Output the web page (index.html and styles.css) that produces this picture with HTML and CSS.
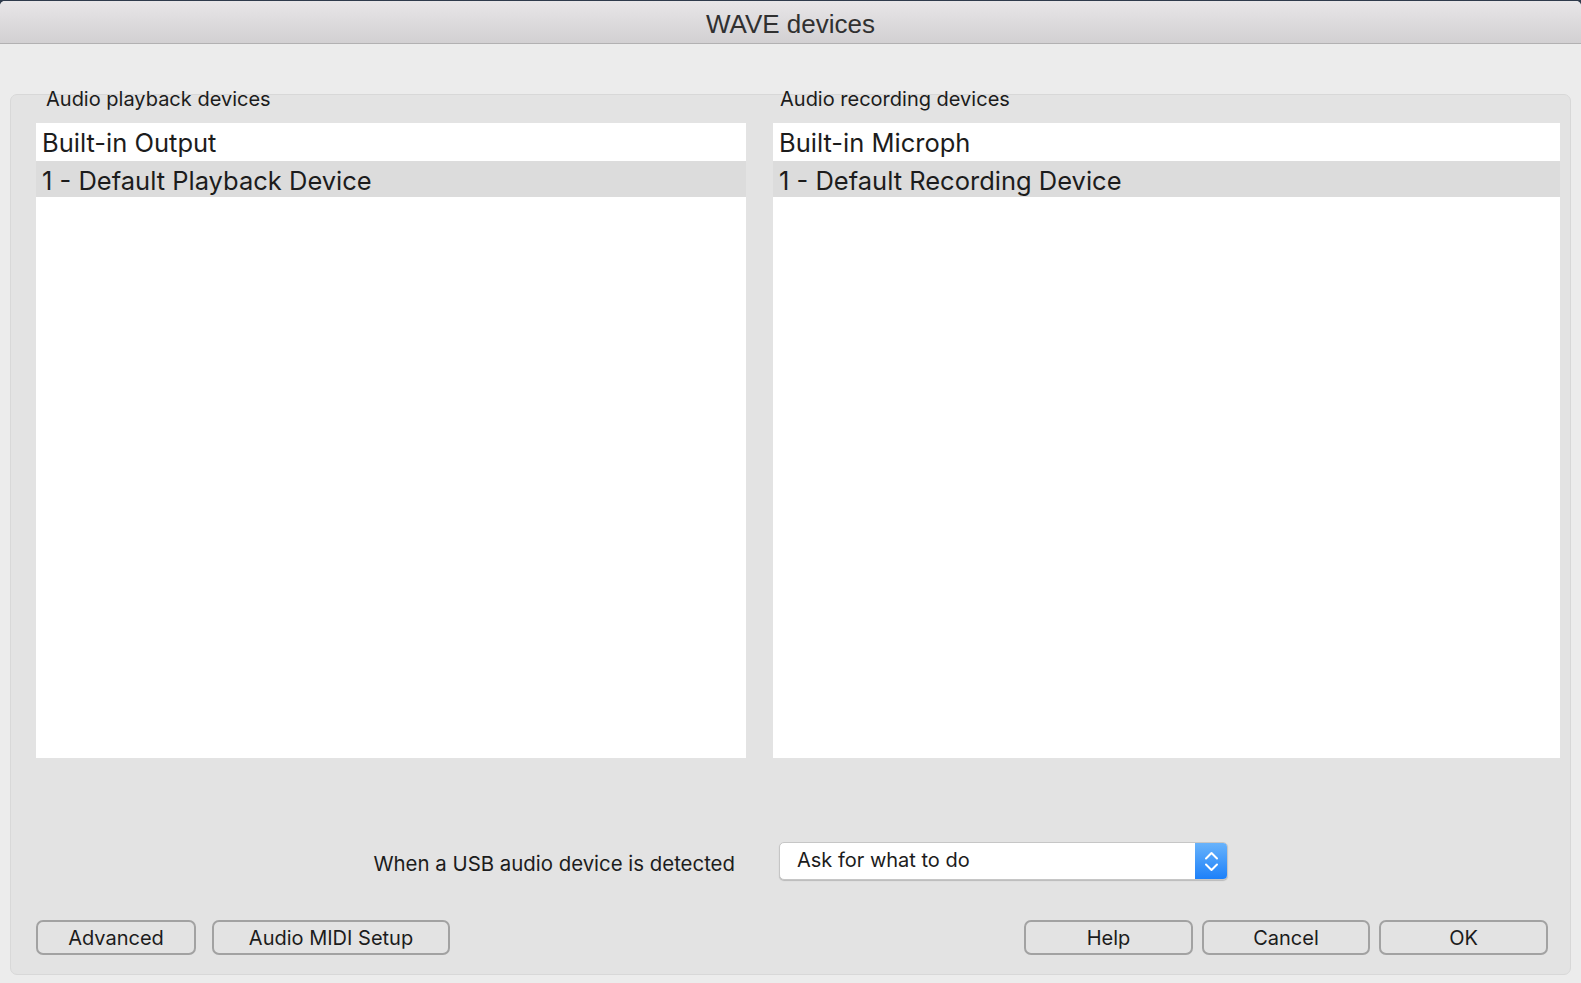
FILE: index.html
```html
<!DOCTYPE html>
<html>
<head>
    <title>WAVE devices</title>
    <link rel="stylesheet" href="styles.css">
</head>
<body>
    <div class="window">
        <div class="titlebar">WAVE devices</div>
        <div class="content">
            <div class="panel">
                <div class="columns">
                    <div class="device-column">
                        <div class="group-label">Audio playback devices</div>
                        <div class="device-list">
                            <div class="row">Built-in Output</div>
                            <div class="row selected">1 - Default Playback Device</div>
                        </div>
                    </div>
                    <div class="device-column">
                        <div class="group-label">Audio recording devices</div>
                        <div class="device-list">
                            <div class="row">Built-in Microph</div>
                            <div class="row selected">1 - Default Recording Device</div>
                        </div>
                    </div>
                </div>

                <div class="usb-row">
                    <div class="usb-label">When a USB audio device is detected</div>
                    <div class="popup">
                        <span class="popup-text">Ask for what to do</span>
                        <span class="popup-arrows">
                            <svg width="33" height="38" viewBox="0 0 33 38">
                                <path d="M11 16.5 L16.5 11 L22 16.5" fill="none" stroke="#fff" stroke-width="2" stroke-linecap="round" stroke-linejoin="round"/>
                                <path d="M11 22.5 L16.5 28 L22 22.5" fill="none" stroke="#fff" stroke-width="2" stroke-linecap="round" stroke-linejoin="round"/>
                            </svg>
                        </span>
                    </div>
                </div>

                <div class="button-row">
                    <div class="button-group">
                        <button class="mac-button advanced">Advanced</button>
                        <button class="mac-button midi">Audio MIDI Setup</button>
                    </div>
                    <div class="button-group right">
                        <button class="mac-button help">Help</button>
                        <button class="mac-button cancel">Cancel</button>
                        <button class="mac-button ok">OK</button>
                    </div>
                </div>
            </div>
        </div>
    </div>
</body>
</html>
```

FILE: styles.css
```css
html, body {
    margin: 0;
    padding: 0;
    background-color: #2f3b4c;
}

body {
    padding-top: 1px;
    font-family: Inter, "Liberation Sans", sans-serif;
    color: #1c1c1c;
}

.window {
    width: 1581px;
    height: 982px;
    background-color: #ececec;
    border-radius: 5px 5px 0 0;
    overflow: hidden;
    display: flex;
    flex-direction: column;
}

.titlebar {
    height: 42px;
    line-height: 46px;
    text-align: center;
    font-family: "Liberation Sans", Arial, sans-serif;
    font-size: 26px;
    color: #303030;
    background: linear-gradient(#e8e6e8, #d2d0d2);
    border-bottom: 1px solid #b2b1b2;
}

.content {
    flex: 1;
    padding: 50px 10px 8px 10px;
    display: flex;
}

/* group box holding everything */
.panel {
    flex: 1;
    background-color: #e3e3e3;
    border: 1px solid #d8d8d8;
    border-radius: 7px;
    display: flex;
    flex-direction: column;
}

.columns {
    display: grid;
    grid-template-columns: 710px 787px;
    column-gap: 27px;
    padding-left: 25px;
}

.group-label {
    margin-top: -8px;
    height: 24px;
    line-height: 24px;
    font-size: 20px;
    padding-left: 10px;
    margin-bottom: 12px;
}

.device-column:last-child .group-label {
    padding-left: 7px;
}

.device-list {
    height: 635px;
    background-color: #fff;
}

.row {
    height: 37px;
    line-height: 40px;
    padding-left: 6px;
    font-size: 25.5px;
    color: #1c1c1c;
    white-space: nowrap;
}

.row:first-child {
    height: 38px;
}

.row.selected {
    height: 36px;
    line-height: 40px;
    background-color: #dcdcdc;
}

.usb-row {
    display: grid;
    grid-template-columns: 710px 787px;
    column-gap: 27px;
    padding-left: 25px;
    margin-top: 84px;
    align-items: center;
}

.usb-label {
    text-align: right;
    padding-right: 11px;
    font-size: 20.4px;
    padding-top: 5px;
}

.popup {
    margin-left: 6px;
    width: 447px;
    height: 36px;
    background-color: #fff;
    border: 1px solid #c6c6c6;
    border-radius: 5px;
    box-shadow: 0 1px 1px rgba(0, 0, 0, 0.18);
    display: flex;
    align-items: center;
    overflow: hidden;
}

.popup-text {
    flex: 1;
    padding-left: 17px;
    font-size: 20px;
    padding-bottom: 3px;
}

.popup-arrows {
    width: 33px;
    height: 38px;
    margin: -1px -1px -1px 0;
    background: linear-gradient(#6ab4fb, #1b7ff9);
    border-radius: 0 5px 5px 0;
    display: flex;
}

.button-row {
    display: flex;
    justify-content: space-between;
    padding: 0 22px 0 25px;
    margin-top: 40px;
}

.button-group {
    display: flex;
    gap: 16px;
}

.button-group.right {
    gap: 9px;
}

.mac-button {
    height: 35px;
    background-color: transparent;
    border: 2px solid #a2a2a2;
    border-radius: 7px;
    font-family: Inter, "Liberation Sans", sans-serif;
    font-size: 20px;
    color: #1c1c1c;
    padding: 0;
}

.advanced { width: 160px; }
.midi { width: 238px; }
.help { width: 169px; }
.cancel { width: 168px; }
.ok { width: 169px; }
```
